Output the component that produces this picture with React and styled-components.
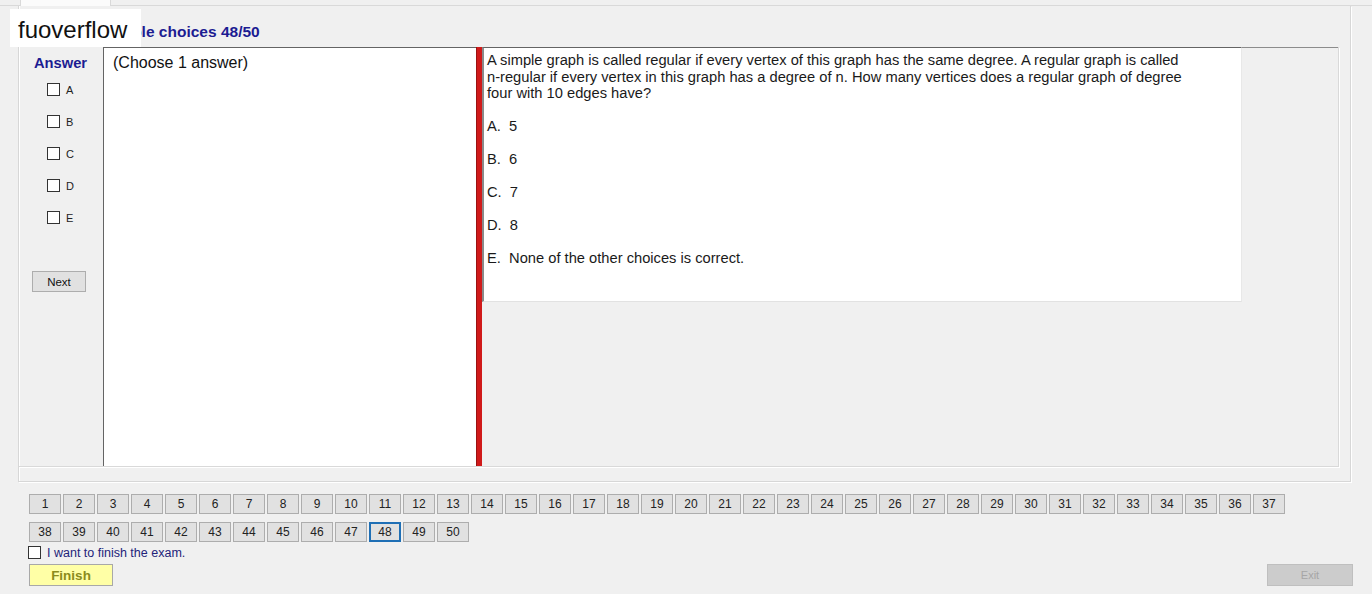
import React from 'react';
import styled, { createGlobalStyle } from 'styled-components';

const GlobalStyle = createGlobalStyle`
    body{
        margin: 0;
        background: #f0f0f0;
        font-family: "Liberation Sans", Arial, sans-serif;
    }
`

const Page = styled.div`
    position: relative;
    width: 1372px;
    height: 594px;
    background: #f0f0f0;
    display: flex;
    flex-direction: column;
    overflow: hidden;
`

const TabStrip = styled.div`
    height: 5px;
    border-bottom: 1px solid #d9d9d9;
    padding-left: 20px;
    display: flex;
`

const Tab = styled.div`
    width: 89px;
    height: 6px;
    background: #fbfbfb;
    border-left: 1px solid #d9d9d9;
    border-right: 1px solid #d9d9d9;
`

const Group = styled.div`
    margin-left: 18px;
    width: 1331px;
    height: 475px;
    border: 1px solid #d7d7d7;
    border-top: none;
    box-shadow: inset 1px 0 0 #fff, 1px 1px 0 #fff;
    display: flex;
    flex-direction: column;
`

const Title = styled.div`
    height: 41px;
    padding: 17px 0 0 77px;
    box-sizing: border-box;
    font-size: 15.5px;
    line-height: 18px;
    font-weight: bold;
    color: #1c1c92;
`

const Watermark = styled.div`
    position: absolute;
    top: 9px;
    left: 10px;
    width: 131px;
    height: 38px;
    box-sizing: border-box;
    padding: 3px 0 0 8px;
    background: #fff;
    font-size: 24px;
    line-height: 36px;
    color: #111;
`

const InnerPanel = styled.div`
    width: 1319px;
    height: 419px;
    display: flex;
    border-right: 1px solid #d9d9d9;
    border-bottom: 1px solid #d9d9d9;
    box-shadow: 1px 1px 0 #fff;
`

const AnswerCol = styled.div`
    width: 84px;
    flex: none;
    padding: 8px 0 0 13px;
    box-sizing: border-box;
    display: flex;
    flex-direction: column;
    align-items: flex-start;
`

const AnswerHead = styled.div`
    margin-left: 2px;
    font-size: 14.7px;
    line-height: 17px;
    font-weight: bold;
    color: #1c1c92;
`

const ChoiceList = styled.div`
    margin: 11px 0 0 15px;
    display: flex;
    flex-direction: column;
    gap: 19px;
`

const ChoiceRow = styled.label`
    display: flex;
    align-items: center;
    gap: 6px;
    height: 13px;
    font-size: 11px;
    color: #222;
`

const Box = styled.span`
    width: 11px;
    height: 11px;
    border: 1px solid #333;
    background: #fff;
    flex: none;
`

const NextButton = styled.button`
    margin-top: 47px;
    width: 54px;
    height: 21px;
    padding: 0;
    background: #e1e1e1;
    border: 1px solid #adadad;
    font-family: "Liberation Sans", Arial, sans-serif;
    font-size: 11.5px;
    color: #111;
`

const ChoiceBox = styled.div`
    width: 373px;
    flex: none;
    background: #fff;
    border-top: 1px solid #646464;
    border-left: 1px solid #646464;
    box-sizing: border-box;
    padding: 6px 9px;
    font-size: 16px;
    line-height: 18px;
    color: #111;
`

const Splitter = styled.div`
    width: 6px;
    flex: none;
    background: #d01a1a;
    border-left: 1px solid #9a1212;
    box-sizing: border-box;
`

const QuestionArea = styled.div`
    flex: 1;
    display: flex;
    align-items: flex-start;
`

const QuestionBox = styled.div`
    width: 760px;
    height: 255px;
    flex: none;
    box-sizing: border-box;
    background: #fff;
    border-top: 1px solid #646464;
    border-left: 2px solid #8a8a8a;
    border-bottom: 1px solid #e2e2e2;
    border-right: 1px solid #e8e8e8;
    padding: 4px 0 0 3px;
    font-size: 14.7px;
    line-height: 16.5px;
    color: #1a1a1a;
`

const QuestionLine = styled.div`
    white-space: nowrap;
`

const Option = styled.div`
    margin-top: 16.5px;
`

const RightFill = styled.div`
    flex: 1;
    align-self: stretch;
    border-top: 1px solid #8c8c8c;
`

const Bottom = styled.div`
    padding: 12px 19px 0 29px;
    display: flex;
    flex-direction: column;
`

const NavGrid = styled.div`
    width: 1260px;
    display: flex;
    flex-wrap: wrap;
    column-gap: 2px;
    row-gap: 8px;
`

const NavButton = styled.button`
    width: 32px;
    height: 20px;
    padding: 0;
    box-sizing: border-box;
    background: #e1e1e1;
    border: 1px solid ${p => (p.$active ? '#1f6fb5' : '#adadad')};
    box-shadow: ${p => (p.$active ? 'inset 0 0 0 1px #1f6fb5' : 'none')};
    font-family: "Liberation Sans", Arial, sans-serif;
    font-size: 12px;
    color: #222;
`

const FinishCheck = styled.label`
    margin: 4px 0 0 -1px;
    display: flex;
    align-items: center;
    gap: 6px;
    height: 13px;
    font-size: 12.5px;
    color: #23237a;
`

const ButtonRow = styled.div`
    margin-top: 5px;
    display: flex;
    justify-content: space-between;
`

const FinishButton = styled.button`
    width: 84px;
    height: 22px;
    padding: 0;
    background: #ffffa6;
    border: 1px solid #a8a8a8;
    font-family: "Liberation Sans", Arial, sans-serif;
    font-size: 13.5px;
    font-weight: bold;
    color: #8b8b1c;
`

const ExitButton = styled.button`
    width: 86px;
    height: 22px;
    padding: 0;
    background: #cccccc;
    border: 1px solid #bfbfbf;
    font-family: "Liberation Sans", Arial, sans-serif;
    font-size: 11px;
    color: #a6a6a6;
`

const letters = ['A', 'B', 'C', 'D', 'E'];
const questionLines = [
    'A simple graph is called regular if every vertex of this graph has the same degree. A regular graph is called',
    'n-regular if every vertex in this graph has a degree of n. How many vertices does a regular graph of degree',
    'four with 10 edges have?',
];
const options = [
    ['A.', '5'],
    ['B.', '6'],
    ['C.', '7'],
    ['D.', '8'],
    ['E.', 'None of the other choices is correct.'],
];

export default function App() {
    const nums = Array.from({ length: 50 }, (_, i) => i + 1);
    return (
        <Page>
            <GlobalStyle />
            <TabStrip>
                <Tab />
            </TabStrip>
            <Group>
                <Title>Multiple choices 48/50</Title>
                <InnerPanel>
                    <AnswerCol>
                        <AnswerHead>Answer</AnswerHead>
                        <ChoiceList>
                            {letters.map(l => (
                                <ChoiceRow key={l}>
                                    <Box />
                                    {l}
                                </ChoiceRow>
                            ))}
                        </ChoiceList>
                        <NextButton>Next</NextButton>
                    </AnswerCol>
                    <ChoiceBox>(Choose 1 answer)</ChoiceBox>
                    <Splitter />
                    <QuestionArea>
                        <QuestionBox>
                            {questionLines.map(line => (
                                <QuestionLine key={line}>{line}</QuestionLine>
                            ))}
                            {options.map(([k, v]) => (
                                <Option key={k}>{k}&nbsp; {v}</Option>
                            ))}
                        </QuestionBox>
                        <RightFill />
                    </QuestionArea>
                </InnerPanel>
            </Group>
            <Bottom>
                <NavGrid>
                    {nums.map(n => (
                        <NavButton key={n} $active={n === 48}>{n}</NavButton>
                    ))}
                </NavGrid>
                <FinishCheck>
                    <Box />
                    I want to finish the exam.
                </FinishCheck>
                <ButtonRow>
                    <FinishButton>Finish</FinishButton>
                    <ExitButton>Exit</ExitButton>
                </ButtonRow>
            </Bottom>
            <Watermark>fuoverflow</Watermark>
        </Page>
    );
}
